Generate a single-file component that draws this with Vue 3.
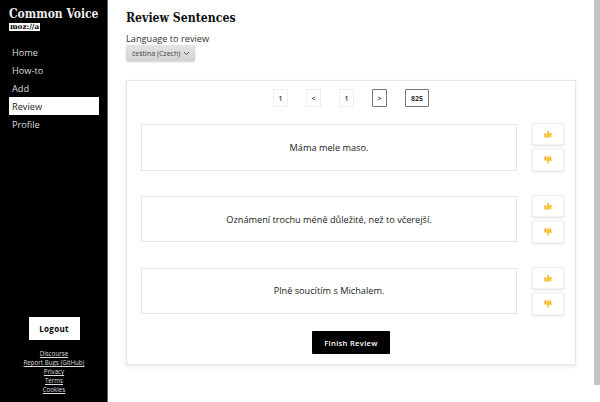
<script setup>
const nav = ["Home", "How-to", "Add", "Review", "Profile"];
const links = ["Discourse", "Report Bugs (GitHub)", "Privacy", "Terms", "Cookies"];
const sentences = [
  "Máma mele maso.",
  "Oznámení trochu méně důležité, než to včerejší.",
  "Plně soucítím s Michalem.",
];
</script>

<template>
  <div class="page">
    <aside class="sidebar">
      <div class="brand">
        <div class="brand-name">Common Voice</div>
        <div class="moz">moz://a</div>
      </div>
      <nav class="nav">
        <a v-for="n in nav" :key="n" class="nav-item" :class="{ active: n == 'Review' }">{{ n }}</a>
      </nav>
      <div class="side-bottom">
        <button class="logout">Logout</button>
        <div class="links">
          <a v-for="l in links" :key="l">{{ l }}</a>
        </div>
      </div>
    </aside>

    <main class="main">
      <h1>Review Sentences</h1>
      <div class="lang">
        <label>Language to review</label>
        <div class="select">
          čeština (Czech)
          <svg width="7" height="5" viewBox="0 0 7 5"><path d="M1 1l2.5 2.5L6 1" fill="none" stroke="#555" stroke-width="1" /></svg>
        </div>
      </div>

      <section class="card">
        <div class="pager">
          <span class="page-btn">1</span>
          <span class="page-btn">&lt;</span>
          <span class="page-btn">1</span>
          <span class="page-btn dark">&gt;</span>
          <span class="page-btn dark total">825</span>
        </div>

        <div class="rows">
          <div v-for="s in sentences" :key="s" class="row">
            <div class="sentence">{{ s }}</div>
            <div class="votes">
              <button class="vote">
                <svg width="8" height="8" viewBox="0 0 10 10">
                  <path d="M0.5 4.5h2v5h-2z" fill="#f2a93b" />
                  <path d="M3 9.5V4.4L5 0.5c.8 0 1.3.6 1.2 1.4L5.9 3.7h3c.6 0 1 .5.9 1.1l-.8 4c-.1.4-.4.7-.9.7z" fill="#fbc531" />
                </svg>
              </button>
              <button class="vote">
                <svg class="flip" width="8" height="8" viewBox="0 0 10 10">
                  <path d="M0.5 4.5h2v5h-2z" fill="#f2a93b" />
                  <path d="M3 9.5V4.4L5 0.5c.8 0 1.3.6 1.2 1.4L5.9 3.7h3c.6 0 1 .5.9 1.1l-.8 4c-.1.4-.4.7-.9.7z" fill="#fbc531" />
                </svg>
              </button>
            </div>
          </div>
        </div>

        <button class="finish">Finish Review</button>
      </section>
    </main>

    <div class="scrollbar"></div>
  </div>
</template>

<style>
html, body {
  margin: 0;
  overflow: hidden;
}
</style>

<style scoped>
.page {
  display: flex;
  height: 402px;
  width: 600px;
  overflow: hidden;
  position: relative;
  font-family: "Open Sans", sans-serif;
  background: #fff;
  color: #222;
}

.sidebar {
  flex: none;
  display: flex;
  flex-direction: column;
  background: #000;
  border-right: 1px solid #666;
  padding: 7px 8px 8px 9px;
  box-sizing: border-box;
  width: 108px;
}

.brand-name {
  font-family: "DejaVu Serif", serif;
  font-stretch: condensed;
  font-weight: bold;
  font-size: 12px;
  line-height: 14px;
  color: #eee;
  white-space: nowrap;
}

.moz {
  width: fit-content;
  margin-top: 2px;
  padding: 0 1px;
  background: #fff;
  color: #000;
  font-family: "DejaVu Serif", serif;
  font-weight: bold;
  font-size: 7.2px;
  line-height: 8px;
}

.nav {
  display: flex;
  flex-direction: column;
  margin-top: 12px;
}

.nav-item {
  height: 18px;
  line-height: 19px;
  padding-left: 3px;
  font-size: 9.2px;
  color: #ddd;
}

.nav-item.active {
  background: #fff;
  color: #222;
}

.side-bottom {
  margin-top: auto;
  display: flex;
  flex-direction: column;
  align-items: center;
}

.logout {
  width: 51px;
  height: 23px;
  padding: 0;
  border: 0;
  background: #fff;
  color: #000;
  font-family: inherit;
  font-weight: 700;
  font-size: 8px;
  letter-spacing: 0.3px;
}

.links {
  margin-top: 9px;
  display: flex;
  flex-direction: column;
  align-items: center;
  font-size: 6.2px;
  line-height: 9px;
  color: #ddd;
  white-space: nowrap;
}

.links a {
  text-decoration: underline;
}

.main {
  flex: 1;
  padding: 10px 24px 0 18px;
  min-width: 0;
}

h1 {
  margin: 0;
  font-family: "DejaVu Serif", serif;
  font-stretch: condensed;
  font-size: 12.2px;
  line-height: 16px;
  color: #111;
}

.lang {
  margin-top: 7px;
}

.lang label {
  display: block;
  font-size: 9.2px;
  line-height: 12px;
  color: #333;
}

.select {
  display: flex;
  width: fit-content;
  align-items: center;
  gap: 3px;
  height: 16px;
  padding: 0 5px 0 6px;
  font-size: 7px;
  color: #444;
  background: linear-gradient(#e4e4e4, #d2d2d2);
  border-radius: 2px;
  box-shadow: 0 1px 2px rgba(0, 0, 0, 0.2);
}

.card {
  margin-top: 19px;
  height: 285px;
  box-sizing: border-box;
  border: 1px solid #e6e6e6;
  box-shadow: 0 2px 4px rgba(0, 0, 0, 0.08);
  padding: 8px 11px 9px 14px;
  display: flex;
  flex-direction: column;
  align-items: center;
}

.pager {
  display: flex;
  align-items: center;
  gap: 18px;
  height: 18px;
  font-weight: 600;
  margin-right: 3px;
}

.page-btn {
  width: 15px;
  height: 18px;
  line-height: 17px;
  text-align: center;
  box-sizing: border-box;
  font-size: 7px;
  color: #333;
  border: 1px solid #eee;
}

.page-btn.dark {
  border-color: #777;
  border-radius: 1px;
}

.page-btn.total {
  width: 24px;
  font-weight: 700;
}

.rows {
  width: 100%;
  margin-top: 17px;
  display: flex;
  flex-direction: column;
  gap: 24.8px;
}

.row {
  display: flex;
  align-items: stretch;
  gap: 15px;
}

.sentence {
  flex: 1;
  height: 46.5px;
  display: flex;
  align-items: center;
  justify-content: center;
  border: 1px solid #e6e6e6;
  box-sizing: border-box;
  font-size: 9.2px;
  color: #222;
}

.votes {
  display: flex;
  flex-direction: column;
  justify-content: space-between;
  width: 32px;
  height: 48px;
  margin-top: -1px;
}

.vote {
  height: 22px;
  padding: 0;
  display: flex;
  align-items: center;
  justify-content: center;
  background: #fff;
  border: 1px solid #f0f0f0;
  box-shadow: 0 1px 3px rgba(0, 0, 0, 0.12);
}

.flip {
  transform: rotate(180deg) scaleX(-1);
}

.finish {
  margin-top: auto;
  margin-bottom: 1px;
  margin-right: 3px;
  width: 78px;
  height: 23px;
  padding: 0;
  border: 0;
  border-radius: 1px;
  background: #000;
  color: #fff;
  font-family: inherit;
  font-weight: 600;
  font-size: 7.6px;
  letter-spacing: 0.3px;
}

.scrollbar {
  position: absolute;
  top: 0;
  right: 0;
  width: 6px;
  height: 385px;
  background: #c4c4c4;
}
</style>
